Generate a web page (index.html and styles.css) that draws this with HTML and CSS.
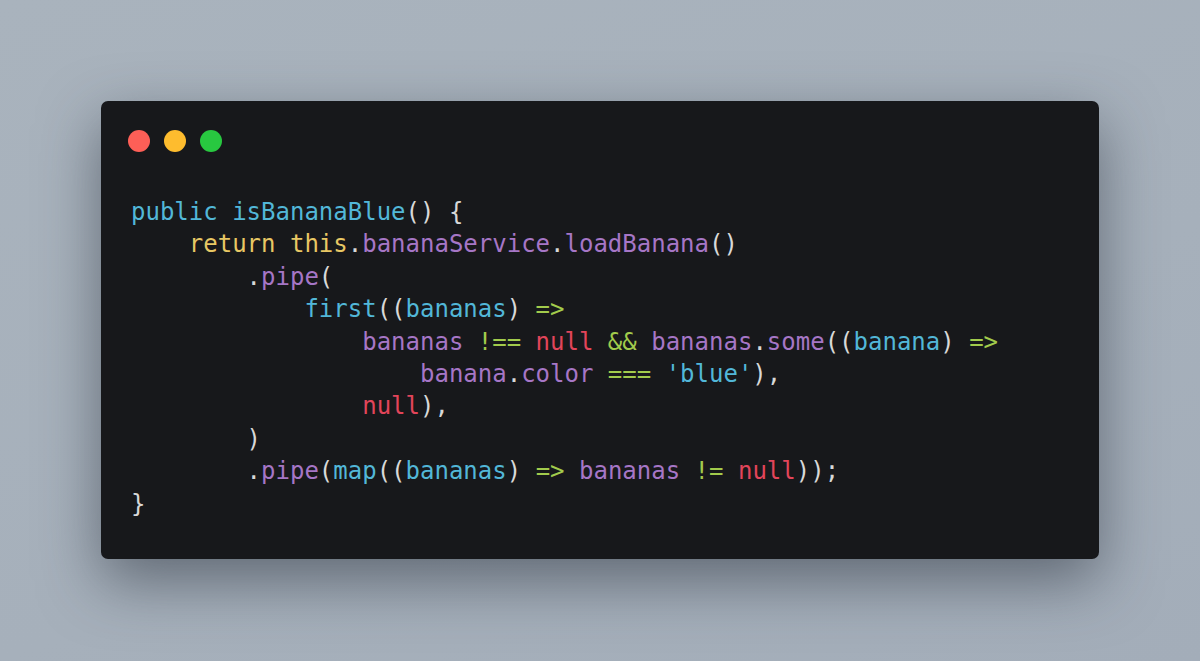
FILE: index.html
```html
<!DOCTYPE html>
<html>
<head>
<meta charset="utf-8">
<link rel="stylesheet" href="styles.css">
</head>
<body>
<main class="stage">
  <section class="window">
    <div class="lights">
      <span class="dot red"></span>
      <span class="dot yellow"></span>
      <span class="dot green"></span>
    </div>
<pre class="code"><span class="c">public isBananaBlue</span><span class="p">() {</span>
    <span class="y">return this</span><span class="p">.</span><span class="m">bananaService</span><span class="p">.</span><span class="m">loadBanana</span><span class="p">()</span>
        <span class="p">.</span><span class="m">pipe</span><span class="p">(</span>
            <span class="c">first</span><span class="p">((</span><span class="c">bananas</span><span class="p">)</span> <span class="g">=&gt;</span>
                <span class="m">bananas</span> <span class="g">!==</span> <span class="r">null</span> <span class="g">&amp;&amp;</span> <span class="m">bananas</span><span class="p">.</span><span class="m">some</span><span class="p">((</span><span class="c">banana</span><span class="p">)</span> <span class="g">=&gt;</span>
                    <span class="m">banana</span><span class="p">.</span><span class="m">color</span> <span class="g">===</span> <span class="c">'blue'</span><span class="p">),</span>
                <span class="r">null</span><span class="p">),</span>
        <span class="p">)</span>
        <span class="p">.</span><span class="m">pipe</span><span class="p">(</span><span class="c">map</span><span class="p">((</span><span class="c">bananas</span><span class="p">)</span> <span class="g">=&gt;</span> <span class="m">bananas</span> <span class="g">!=</span> <span class="r">null</span><span class="p">));</span>
<span class="p">}</span></pre>
  </section>
</main>
</body>
</html>
```
FILE: styles.css
```css
html, body {
  margin: 0;
  padding: 0;
}
body {
  width: 1200px;
  height: 661px;
  overflow: hidden;
  background: linear-gradient(160deg, #a9b3bd 0%, #a6b0bb 60%, #a3adb9 100%);
}
.stage {
  padding: 101px 101px 0 101px;
}
.window {
  width: 998px;
  height: 458px;
  box-sizing: border-box;
  background: #17181b;
  border-radius: 7px;
  box-shadow: 0 22px 60px rgba(40, 48, 58, 0.55);
  padding: 29px 30px 0 27px;
}
.lights {
  display: flex;
  gap: 14px;
  height: 22px;
}
.dot {
  width: 22px;
  height: 22px;
  border-radius: 50%;
  display: block;
}
.red { background: #fe5f57; }
.yellow { background: #febc2e; }
.green { background: #28c840; }
.code {
  margin: 44px 0 0 3px;
  font-family: "DejaVu Sans Mono", monospace;
  font-size: 24px;
  line-height: 32.4px;
  color: #d8d8d8;
}
.c { color: #52b7d8; }
.y { color: #e8c764; }
.m { color: #a676c6; }
.r { color: #e2455a; }
.g { color: #a2cb4c; }
.p { color: #d8d8d8; }
```
